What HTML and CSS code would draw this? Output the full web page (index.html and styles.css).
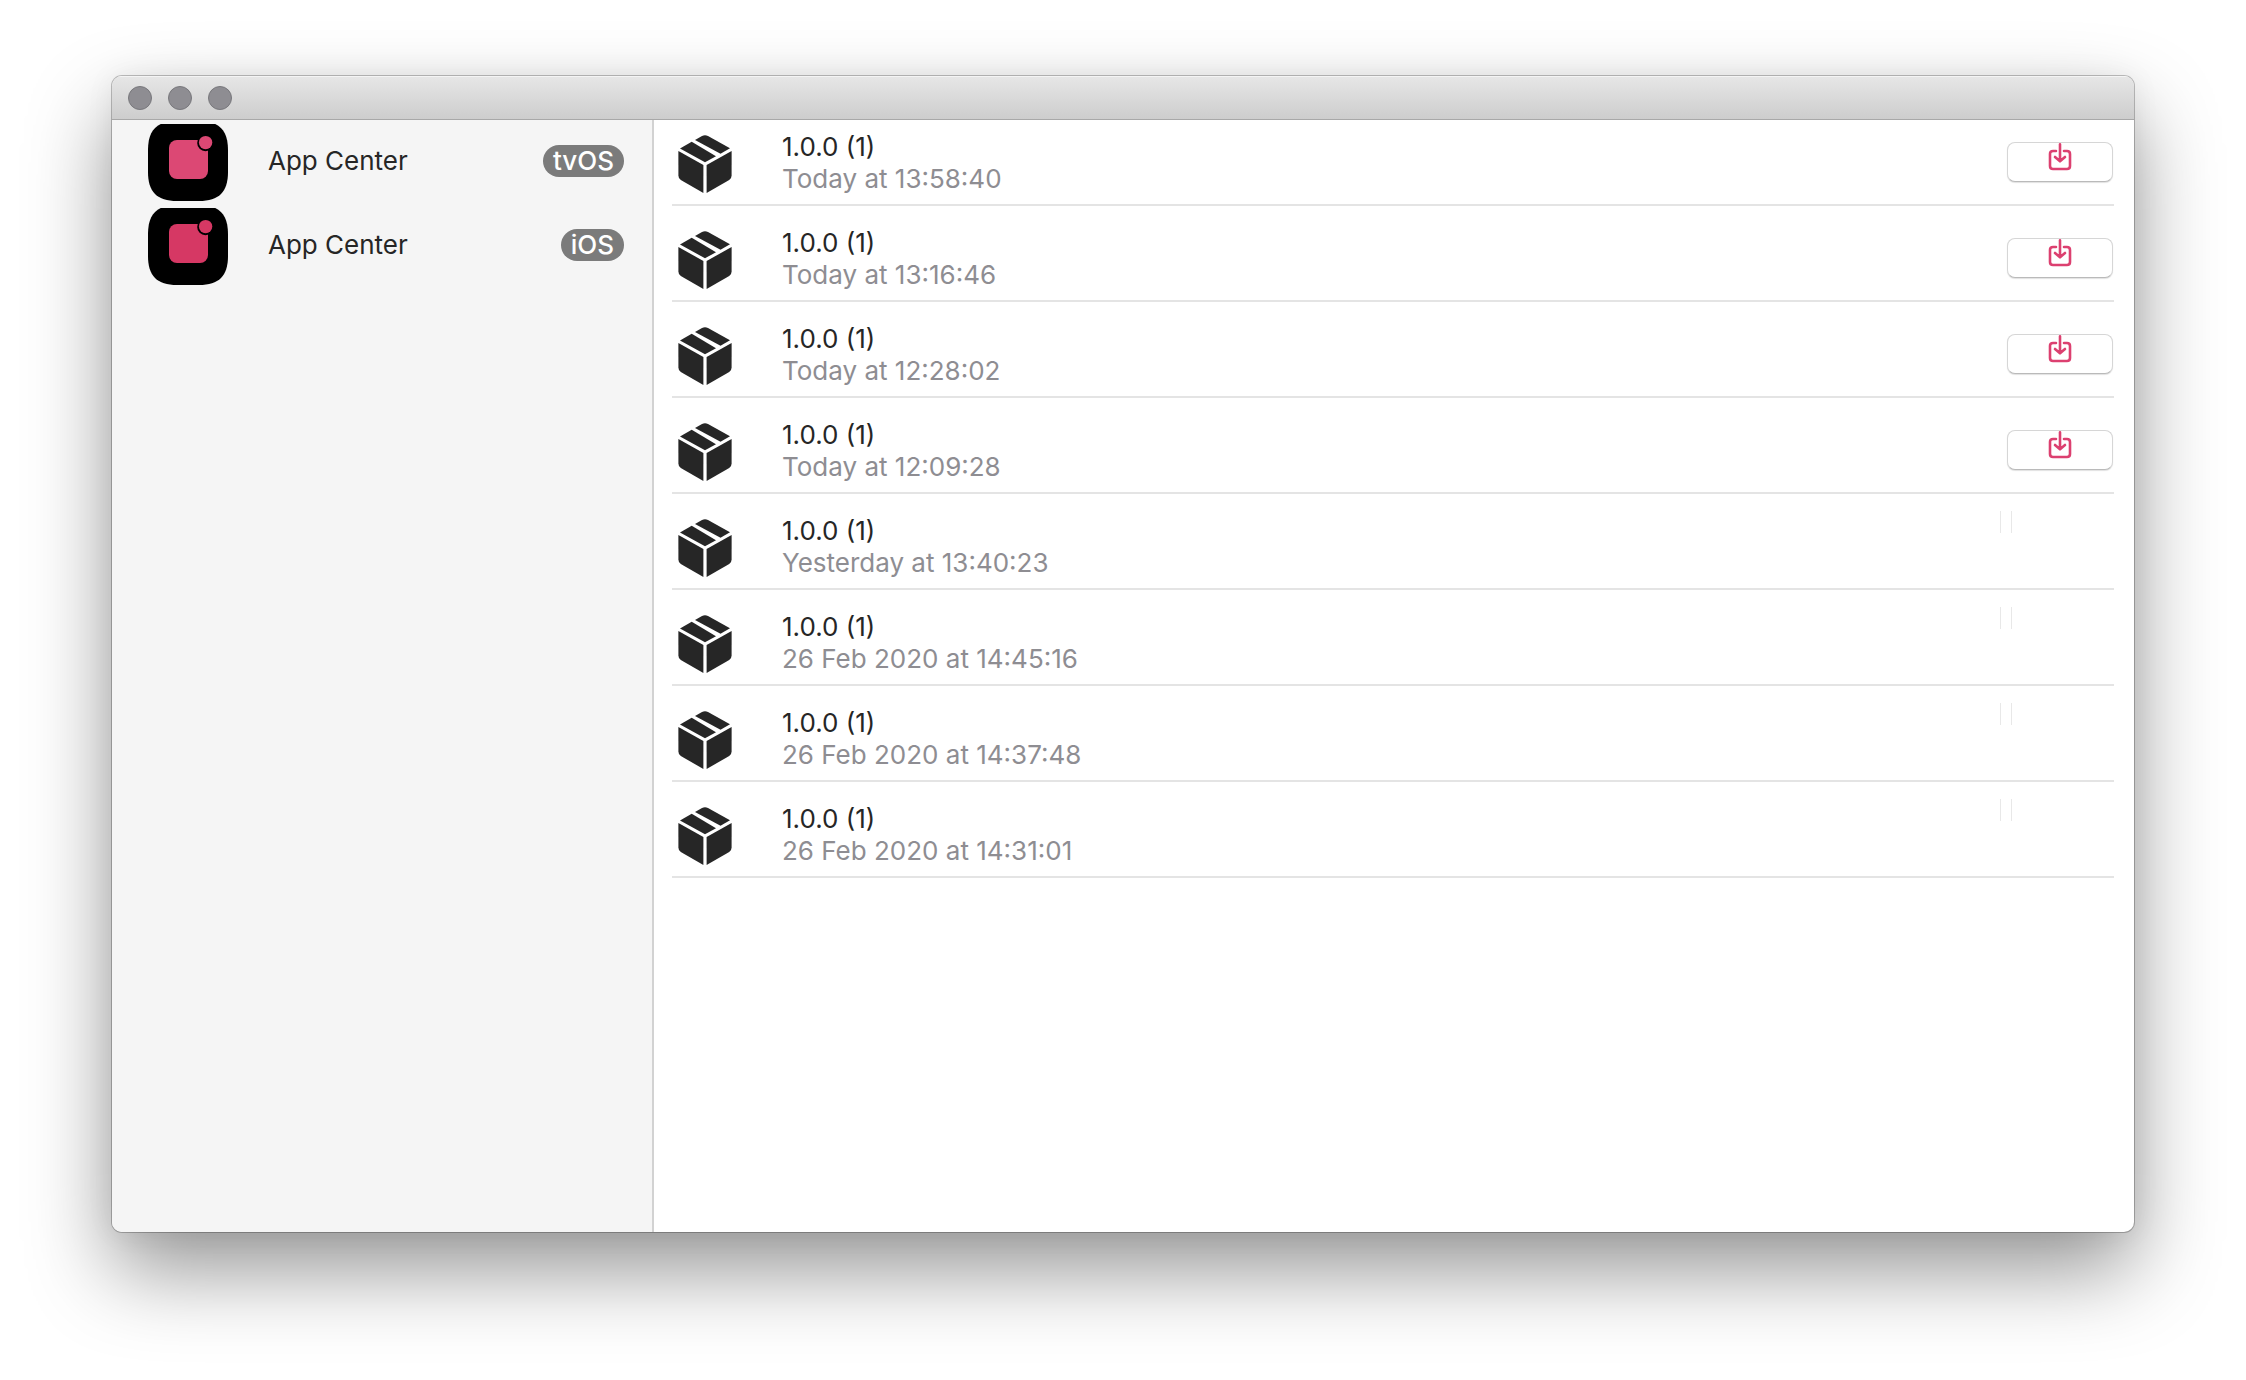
FILE: index.html
```html
<!DOCTYPE html>
<html lang="en">
<head>
<meta charset="utf-8">
<meta name="viewport" content="width=device-width, initial-scale=1">
<title>App Center</title>
<link rel="stylesheet" href="styles.css">
</head>
<body>
<svg class="sprite" aria-hidden="true">
  <symbol id="package" viewBox="0 0 54 58">
    <path d="M17 4.900 24 1Q27 -.6 30 1L52 13.300 42.500 18.800Z"/>
    <path d="M13.700 6.800 2 13.400 27 27.300 38 21.200Z"/>
    <path d="M.4 16 25.400 30V58L2.800 45Q.4 43.600 .4 40.500Z"/>
    <path d="M53.600 16 28.600 30V58L51.200 45Q53.600 43.600 53.600 40.500Z"/>
  </symbol>
  <symbol id="app" viewBox="0 3 80 77">
    <path d="M0 29C0 9 9 0 29 0H51C71 0 80 9 80 29V51C80 71 71 80 51 80H29C9 80 0 71 0 51Z"/>
    <rect x="21" y="19" width="39" height="39" rx="8" fill="currentColor"/>
    <circle cx="57.500" cy="22" r="8.300"/>
    <circle cx="57.600" cy="21.600" r="6.700" fill="currentColor"/>
  </symbol>
  <symbol id="download" viewBox="0 0 24 28">
    <path d="M8 8H5Q2 8 2 11V23Q2 26 5 26H19Q22 26 22 23V11Q22 8 19 8H16M12 1.300V18M7 14 12 18.300 17 14" fill="none" stroke="currentColor" stroke-width="2.600" stroke-linecap="round" stroke-linejoin="round"/>
  </symbol>
</svg>

<div class="window">
  <header class="titlebar">
    <button class="light" type="button" aria-label="Close"></button>
    <button class="light" type="button" aria-label="Minimise"></button>
    <button class="light" type="button" aria-label="Zoom"></button>
  </header>
  <div class="panes">
    <nav class="sidebar" aria-label="Apps">
      <a class="app" href="#tvos"><svg class="app-icon app-icon-tv"><use href="#app"/></svg><span class="app-name">App Center</span><span class="badge">tvOS</span></a>
      <a class="app" href="#ios"><svg class="app-icon"><use href="#app"/></svg><span class="app-name">App Center</span><span class="badge">iOS</span></a>
    </nav>
    <main class="content">
      <ul class="releases">
        <li class="release"><svg class="package"><use href="#package"/></svg><div class="info"><div>1.0.0 (1)</div><div class="date">Today at 13:58:40</div></div><button class="install" type="button" aria-label="Install"><svg class="download"><use href="#download"/></svg></button></li>
        <li class="release"><svg class="package"><use href="#package"/></svg><div class="info"><div>1.0.0 (1)</div><div class="date">Today at 13:16:46</div></div><button class="install" type="button" aria-label="Install"><svg class="download"><use href="#download"/></svg></button></li>
        <li class="release"><svg class="package"><use href="#package"/></svg><div class="info"><div>1.0.0 (1)</div><div class="date">Today at 12:28:02</div></div><button class="install" type="button" aria-label="Install"><svg class="download"><use href="#download"/></svg></button></li>
        <li class="release"><svg class="package"><use href="#package"/></svg><div class="info"><div>1.0.0 (1)</div><div class="date">Today at 12:09:28</div></div><button class="install" type="button" aria-label="Install"><svg class="download"><use href="#download"/></svg></button></li>
        <li class="release"><svg class="package"><use href="#package"/></svg><div class="info"><div>1.0.0 (1)</div><div class="date">Yesterday at 13:40:23</div></div><button class="install-empty" type="button" aria-label="Install" disabled></button></li>
        <li class="release"><svg class="package"><use href="#package"/></svg><div class="info"><div>1.0.0 (1)</div><div class="date">26 Feb 2020 at 14:45:16</div></div><button class="install-empty" type="button" aria-label="Install" disabled></button></li>
        <li class="release"><svg class="package"><use href="#package"/></svg><div class="info"><div>1.0.0 (1)</div><div class="date">26 Feb 2020 at 14:37:48</div></div><button class="install-empty" type="button" aria-label="Install" disabled></button></li>
        <li class="release"><svg class="package"><use href="#package"/></svg><div class="info"><div>1.0.0 (1)</div><div class="date">26 Feb 2020 at 14:31:01</div></div><button class="install-empty" type="button" aria-label="Install" disabled></button></li>
      </ul>
    </main>
  </div>
</div>
</body>
</html>
```
FILE: styles.css
```css
* {
  box-sizing: border-box;
}

body {
  display: flex;
  min-height: 100vh;
  margin: 0;
  padding: 76px 112px 148px;
  background: #fff;
  color: #262626;
  font: 26px/32px Inter, "Liberation Sans", sans-serif;
}

button {
  margin: 0;
  padding: 0;
}

.sprite {
  display: none;
}

.window {
  display: flex;
  flex: 1;
  flex-direction: column;
  overflow: hidden;
  border-radius: 10px;
  background: #fff;
  box-shadow: 0 0 0 1px rgba(0, 0, 0, 0.24), 0 38px 84px rgba(0, 0, 0, 0.42), 0 0 30px rgba(0, 0, 0, 0.06);
}

.titlebar {
  display: flex;
  align-items: center;
  gap: 16px;
  height: 44px;
  padding: 0 16px;
  border-top: 1px solid #f4f4f4;
  border-bottom: 1px solid #a8a8a8;
  background: linear-gradient(#e6e6e6, #cdcdcd);
}

.light {
  width: 24px;
  height: 24px;
  border: 1px solid #78787c;
  border-radius: 50%;
  background: #8e8d92;
}

.panes {
  display: flex;
  flex: 1;
}

.sidebar {
  display: flex;
  flex: none;
  flex-direction: column;
  gap: 7px;
  width: 542px;
  padding: 4px 28px 0 36px;
  border-right: 2px solid #d2d2d2;
  background: #f5f5f5;
}

.app {
  display: flex;
  align-items: center;
  color: inherit;
  text-decoration: none;
}

.app-icon {
  width: 80px;
  height: 77px;
  color: #d63864;
}

.app-icon-tv {
  color: #dc4874;
}

.app-name,
.badge {
  margin-bottom: 3px;
}

.app-name {
  flex: 1;
  margin-left: 40px;
}

.badge {
  padding: 0 10px;
  border-radius: 16px;
  background: #7b7b7b;
  color: #fff;
  font-weight: 500;
}

.content {
  flex: 1;
  padding: 0 20px 0 18px;
}

.releases {
  margin: 0;
  padding: 0;
  list-style: none;
}

.release {
  display: flex;
  align-items: flex-start;
  height: 96px;
  padding: 17px 0 0 6px;
  border-bottom: 2px solid #e4e4e4;
}

.release:first-child {
  height: 86px;
  padding-top: 7px;
}

.package {
  width: 54px;
  height: 58px;
  margin-top: 8px;
  fill: #262626;
}

.info {
  flex: 1;
  margin: 4px 0 0 50px;
}

.date {
  color: #8e8d92;
}

.install {
  width: 106px;
  height: 40px;
  margin: 15px 1px 0 0;
  border: 1px solid #d6d6d6;
  border-bottom-color: #bababa;
  border-radius: 8px;
  background: #fff;
  box-shadow: 0 1px 1px rgba(0, 0, 0, 0.12);
  color: #dc4070;
}

.download {
  display: block;
  width: 24px;
  height: 28px;
  margin: 0 auto 12px;
}

.install-empty {
  width: 12px;
  height: 22px;
  margin-right: 102px;
  border: solid #e8e8e8;
  border-width: 0 1px;
  background: none;
}
```
